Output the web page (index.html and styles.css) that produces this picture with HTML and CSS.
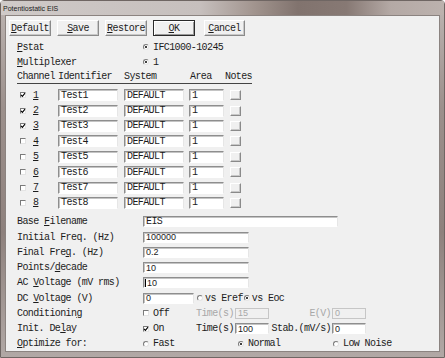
FILE: index.html
```html
<!DOCTYPE html>
<html lang="en">
<head>
    <meta charset="UTF-8">
    <title>Potentiostatic EIS</title>
    <link rel="stylesheet" href="styles.css">
</head>
<body>

<div class="window">
    <div class="titlebar">Potentiostatic EIS</div>

    <div class="client">
        <div class="toolbar">
            <span class="btn"><u>D</u>efault</span>
            <span class="btn"><u>S</u>ave</span>
            <span class="btn"><u>R</u>estore</span>
            <span class="btn default"><u>O</u>K</span>
            <span class="btn cancel"><u>C</u>ancel</span>
        </div>

        <div class="opt-row first">
            <span class="label"><u>P</u>stat</span>
            <span class="radio on"></span><span>IFC1000-10245</span>
        </div>
        <div class="opt-row">
            <span class="label"><u>M</u>ultiplexer</span>
            <span class="radio on"></span><span>1</span>
        </div>

        <div class="chan-head">
            <span>Channel</span>
            <span>Identifier</span>
            <span>System</span>
            <span>Area</span>
            <span class="notes-head">Notes</span>
        </div>

        <div class="channels">
            <div class="chan-row">
                <span class="chan"><span class="check on"><svg viewBox="0 0 6 6"><path d="M1 2.8 L2.4 4.3 L5 1.2"/></svg></span><u>1</u></span>
                <span class="field">Test1</span>
                <span class="field">DEFAULT</span>
                <span class="field area">1</span>
                <span class="note-btn"></span>
            </div>
            <div class="chan-row">
                <span class="chan"><span class="check on"><svg viewBox="0 0 6 6"><path d="M1 2.8 L2.4 4.3 L5 1.2"/></svg></span><u>2</u></span>
                <span class="field">Test2</span>
                <span class="field">DEFAULT</span>
                <span class="field area">1</span>
                <span class="note-btn"></span>
            </div>
            <div class="chan-row">
                <span class="chan"><span class="check on"><svg viewBox="0 0 6 6"><path d="M1 2.8 L2.4 4.3 L5 1.2"/></svg></span><u>3</u></span>
                <span class="field">Test3</span>
                <span class="field">DEFAULT</span>
                <span class="field area">1</span>
                <span class="note-btn"></span>
            </div>
            <div class="chan-row">
                <span class="chan"><span class="check"></span><u>4</u></span>
                <span class="field">Test4</span>
                <span class="field">DEFAULT</span>
                <span class="field area">1</span>
                <span class="note-btn"></span>
            </div>
            <div class="chan-row">
                <span class="chan"><span class="check"></span><u>5</u></span>
                <span class="field">Test5</span>
                <span class="field">DEFAULT</span>
                <span class="field area">1</span>
                <span class="note-btn"></span>
            </div>
            <div class="chan-row">
                <span class="chan"><span class="check"></span><u>6</u></span>
                <span class="field">Test6</span>
                <span class="field">DEFAULT</span>
                <span class="field area">1</span>
                <span class="note-btn"></span>
            </div>
            <div class="chan-row">
                <span class="chan"><span class="check"></span><u>7</u></span>
                <span class="field">Test7</span>
                <span class="field">DEFAULT</span>
                <span class="field area">1</span>
                <span class="note-btn"></span>
            </div>
            <div class="chan-row">
                <span class="chan"><span class="check"></span><u>8</u></span>
                <span class="field">Test8</span>
                <span class="field">DEFAULT</span>
                <span class="field area">1</span>
                <span class="note-btn"></span>
            </div>
        </div>

        <div class="params">
            <div class="form-row">
                <span class="label">Base <u>F</u>ilename</span>
                <span class="field wide">EIS</span>
            </div>
            <div class="form-row">
                <span class="label">Initial Freq. (Hz)</span>
                <span class="field num mid">100000</span>
            </div>
            <div class="form-row">
                <span class="label">Final Fre<u>q</u>. (Hz)</span>
                <span class="field num mid">0.2</span>
            </div>
            <div class="form-row">
                <span class="label">Points/<u>d</u>ecade</span>
                <span class="field num mid">10</span>
            </div>
            <div class="form-row">
                <span class="label">AC <u>V</u>oltage (mV rms)</span>
                <span class="field num mid"><span class="caret"></span>10</span>
            </div>
            <div class="form-row">
                <span class="label">DC <u>V</u>oltage (V)</span>
                <span class="field num short">0</span>
                <span class="radio gap"></span><span class="opt-text">vs Eref</span>
                <span class="radio on"></span><span>vs Eoc</span>
            </div>
            <div class="form-row">
                <span class="label">Conditionin<u>g</u></span>
                <span class="cell-check"><span class="check"></span>Off</span>
                <span class="cell-time muted">Time(s)</span>
                <span class="field num small disabled">15</span>
                <span class="cell-right muted">E(V)</span>
                <span class="field num small disabled">0</span>
            </div>
            <div class="form-row">
                <span class="label">Init. De<u>l</u>ay</span>
                <span class="cell-check"><span class="check on"><svg viewBox="0 0 6 6"><path d="M1 2.8 L2.4 4.3 L5 1.2"/></svg></span>On</span>
                <span class="cell-time">Time(s)</span>
                <span class="field num small">100</span>
                <span class="cell-right">Stab.(mV/s)</span>
                <span class="field num small">0</span>
            </div>
            <div class="form-row">
                <span class="label"><u>O</u>ptimize for:</span>
                <span class="cell-opt"><span class="radio"></span>Fast</span>
                <span class="cell-opt"><span class="radio on"></span>Normal</span>
                <span class="cell-opt"><span class="radio"></span>Low Noise</span>
            </div>
        </div>
    </div>
</div>

</body>
</html>
```

FILE: styles.css
```css
body {
    margin: 0;
    width: 445px;
    height: 358px;
    overflow: hidden;
    font-family: "Liberation Mono", "Courier New", monospace;
    font-size: 10px;
    letter-spacing: -0.6px;
    color: #1c1c1c;
}

/* window frame */
.window {
    box-sizing: border-box;
    height: 358px;
    display: flex;
    flex-direction: column;
    padding: 0 4px 5px 4px;
    border: 1px solid #6f6663;
    border-radius: 4px 4px 0 0;
    background: linear-gradient(180deg, #bdb5b2 0%, #9c908c 30%, #8e817d 65%, #b1a8a5 100%);
}

.titlebar {
    flex: none;
    height: 14px;
    margin: 0 -4px;
    padding-left: 2px;
    display: flex;
    align-items: center;
    font-family: "Liberation Sans", Arial, sans-serif;
    font-size: 7px;
    letter-spacing: 0;
    color: #1a1a1a;
    background: linear-gradient(90deg, #cfcac8 0%, #c6bfbd 45%, #a2958f 57%, #81736e 67%, #877974 78%, #b4a9a5 88%, #bcb2ae 100%);
}

.client {
    flex: 1;
    overflow: hidden;
    background-color: #f0f0f0;
    border: 1px solid #8b8380;
    padding-left: 11px;
}

/* buttons */
.toolbar {
    display: flex;
    gap: 6px;
    margin: 4px 0 0 -8px;
}

.btn {
    box-sizing: border-box;
    width: 42px;
    height: 16px;
    display: flex;
    align-items: center;
    justify-content: center;
    background-color: #f0f0f0;
    border: 1px solid;
    border-color: #ffffff #8a8a8a #8a8a8a #ffffff;
    box-shadow: inset -1px -1px 0 #c8c8c8;
}

.btn.default {
    border: 1px solid #2a2a2a;
    box-shadow: inset 1px 1px 0 #ffffff, inset -1px -1px 0 #9a9a9a;
}

.btn.cancel {
    margin-left: 3px;
    width: 41px;
}

/* option rows */
.opt-row {
    height: 15px;
    display: flex;
    align-items: center;
}

.opt-row.first {
    margin-top: 3.5px;
}

.label {
    flex: none;
    width: 126px;
    white-space: nowrap;
}

.radio {
    position: relative;
    flex: none;
    box-sizing: border-box;
    width: 6px;
    height: 6px;
    margin-right: 4px;
    border-radius: 50%;
    border: 1px solid;
    border-color: #7a7a7a #e4e4e4 #e4e4e4 #7a7a7a;
    background-color: #ffffff;
}

.radio.on::after {
    content: "";
    position: absolute;
    left: 1px;
    top: 1px;
    width: 2px;
    height: 2px;
    border-radius: 50%;
    background-color: #000;
}

.check {
    flex: none;
    box-sizing: border-box;
    width: 6px;
    height: 6px;
    margin-right: 4px;
    border: 1px solid;
    border-color: #7a7a7a #e4e4e4 #e4e4e4 #7a7a7a;
    background-color: #ffffff;
    display: flex;
}

.check svg {
    width: 6px;
    height: 6px;
    margin: -1px 0 0 -1px;
    overflow: visible;
}

.check path {
    fill: none;
    stroke: #000;
    stroke-width: 1.1;
}

/* channel table */
.chan-head {
    display: grid;
    grid-template-columns: 41px 66px 66px 35px 27px;
    width: 235px;
    height: 13px;
    align-items: center;
    border-bottom: 1px solid #444;
}

.notes-head {
    white-space: nowrap;
}

.channels {
    margin-top: 4px;
}

.chan-row {
    display: grid;
    grid-template-columns: 41px 66px 65px 41px 11px;
    height: 15.4px;
    align-items: center;
}

.chan {
    display: flex;
    align-items: center;
    padding-left: 3px;
}

.chan .check {
    margin-right: 7px;
}

.field {
    box-sizing: border-box;
    width: 60px;
    height: 12px;
    display: flex;
    align-items: center;
    padding-left: 2px;
    background-color: #ffffff;
    border: 1px solid;
    border-color: #8e8e8e #e6e6e6 #ffffff #8e8e8e;
    box-shadow: inset 1px 1px 0 #c4c4c4;
    white-space: nowrap;
    overflow: hidden;
}

.field.area {
    width: 35px;
}

.note-btn {
    box-sizing: border-box;
    width: 11px;
    height: 10px;
    border: 1px solid;
    border-color: #ffffff #8a8a8a #8a8a8a #ffffff;
    box-shadow: inset -1px -1px 0 #c8c8c8;
    background-color: #f0f0f0;
}

/* parameters */
.params {
    margin-top: 3.7px;
}

.form-row {
    height: 15.25px;
    display: flex;
    align-items: center;
    white-space: nowrap;
}

.form-row .field {
    height: 11px;
}

.field.num {
    font-family: "Liberation Sans", Arial, sans-serif;
    font-size: 9px;
    letter-spacing: 0;
}

.field.wide { width: 195px; }
.field.mid { width: 106px; }
.field.short { width: 51px; }
.field.small { width: 34px; }

.field.disabled {
    background-color: #f0f0f0;
    color: #a8a8a8;
    border-color: #c6c6c6;
    box-shadow: none;
}

.caret {
    width: 1px;
    height: 8px;
    margin: 0 1px 0 -1px;
    background-color: #000;
}

.radio.gap {
    margin-left: 3px;
    margin-right: 2px;
}

.opt-text + .radio {
    margin-left: 1px;
    margin-right: 2px;
}

.cell-check {
    width: 53px;
    display: flex;
    align-items: center;
}

.cell-time {
    width: 39px;
}

.cell-right {
    width: 63px;
    text-align: right;
    padding-right: 1px;
    box-sizing: border-box;
}

.muted {
    color: #a8a8a8;
}

.cell-opt {
    width: 95px;
    display: flex;
    align-items: center;
}
```
